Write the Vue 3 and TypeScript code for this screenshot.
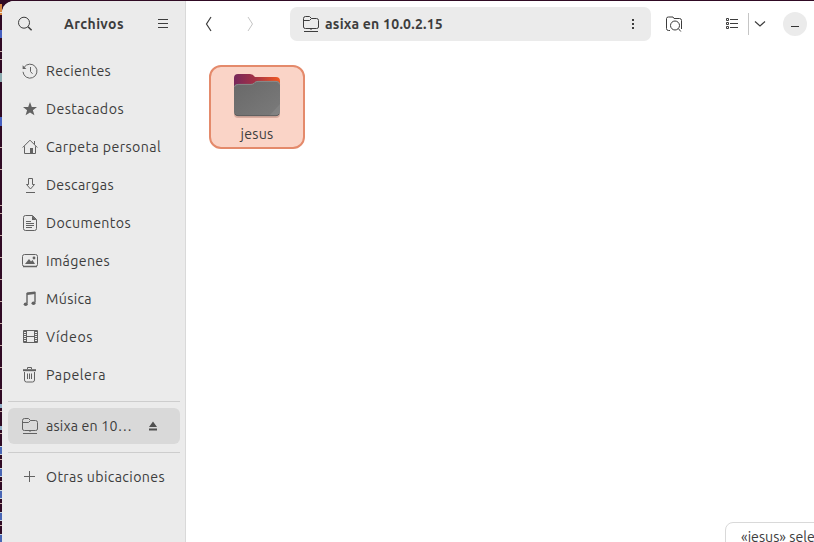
<script setup lang="ts">
import type { Directive } from 'vue'

interface Place {
  name: string
  icon: string
  width: number
}

const places: Place[] = [
  { name: 'Recientes', icon: 'recent', width: 65 },
  { name: 'Destacados', icon: 'star', width: 78 },
  { name: 'Carpeta personal', icon: 'home', width: 115 },
  { name: 'Descargas', icon: 'download', width: 68 },
  { name: 'Documentos', icon: 'document', width: 85 },
  { name: 'Imágenes', icon: 'image', width: 64 },
  { name: 'Música', icon: 'music', width: 46 },
  { name: 'Vídeos', icon: 'video', width: 47 },
  { name: 'Papelera', icon: 'trash', width: 60 },
]

interface Mark {
  top: number
  height: number
  color: string
}

const light = '#c9ada8'
const marks: Mark[] = [
  { top: 4, height: 11, color: '#d88842' },
  { top: 12, height: 1, color: '#eee0d0' },
  { top: 30, height: 8, color: '#465fc0' },
  { top: 73, height: 9, color: '#8cabb0' },
  { top: 117, height: 9, color: '#465fc0' },
  ...[51, 59, 147, 169, 205, 213, 235, 257, 279, 301, 323, 345, 367, 389].map((top) => ({ top, height: 1, color: light })),
  { top: 404, height: 4, color: '#91aec6' },
  { top: 411, height: 1, color: light },
  { top: 426, height: 4, color: '#91aec6' },
  { top: 433, height: 1, color: light },
  ...[446, 468, 490, 512, 534].flatMap((top) => [
    { top, height: 9, color: '#4966b5' },
    { top, height: 1, color: '#c4d4dc' },
    { top: top + 8, height: 1, color: '#c4d4dc' },
    { top: top + 13, height: 1, color: light },
  ]),
]

// Tracks a label so that it occupies the given width.
const vTrack: Directive<HTMLElement, number> = {
  mounted(el, { value }) {
    const natural = el.getBoundingClientRect().width
    const count = (el.textContent ?? '').length
    el.style.letterSpacing = `${(value - natural) / count}px`
  },
}
</script>

<template>
  <div class="desktop">
    <div class="terminal">
      <i v-for="(m, i) in marks" :key="i" :style="{ top: m.top + 'px', height: m.height + 'px', background: m.color }"></i>
    </div>
    <div class="window">
      <aside class="sidebar">
        <header class="side-head">
          <svg class="ic dark" viewBox="0 0 16 16"><circle cx="7" cy="6.7" r="5.5" /><path d="M11 10.7l3.6 3.6" stroke-width="1.5" /></svg>
          <h1><span v-track="60">Archivos</span></h1>
          <svg class="ic dark" viewBox="0 0 16 16"><path d="M3 3.5h10M3 7.5h10M3 11.5h10" /></svg>
        </header>
        <nav>
          <a v-for="p in places" :key="p.name" class="row">
            <svg class="ic" viewBox="0 0 16 16">
              <template v-if="p.icon === 'recent'">
                <path d="M2.2 4.2A7 7 0 1 1 1 8.8" /><path d="M.6 2.3v3.8h3.8z" class="fill" /><path d="M8.5 4v4.5l2 2.3" />
              </template>
              <path v-else-if="p.icon === 'star'" class="fill" d="M8 1l1.8 4.9 5.2.2-4.1 3.2 1.5 5L8 11.4l-4.4 2.9 1.5-5L1 6.1l5.2-.2z" />
              <template v-else-if="p.icon === 'home'">
                <path d="M.7 8.5L8 1.2l7.3 7.3M2.5 7.3v7.2h11V7.3M12.5 2v3.5" /><path class="fill" d="M8 9h3v5.5H8z" />
              </template>
              <path v-else-if="p.icon === 'download'" d="M6.5 1.5h4v6h2L8.5 12l-4-4.5h2zM4 15.5h9" />
              <template v-else-if="p.icon === 'document'">
                <path d="M3.5.5h7l4 4v9q0 2-2 2h-9q-2 0-2-2v-11q0-2 2-2z" /><path class="fill" d="M10 .5l4.5 4.5H10z" /><path d="M4 6.5h5M4 8.5h8M4 10.5h8M4 12.5h6" />
              </template>
              <template v-else-if="p.icon === 'image'">
                <rect x=".5" y="1.5" width="15" height="12" rx="2" /><path d="M1 13.5h14" stroke-width="1.5" /><path class="fill" d="M3 11l4-5 2 2.5L10.5 7l2.5 4z" /><circle class="fill" cx="12" cy="5" r="1.4" />
              </template>
              <template v-else-if="p.icon === 'music'">
                <path d="M5 12.5V2.5l8-1v10" stroke-width="1.4" /><path d="M5 2.8l8-1" stroke-width="2.6" /><ellipse class="fill" cx="3.7" cy="13.2" rx="2" ry="1.7" /><ellipse class="fill" cx="11.5" cy="12.2" rx="2" ry="1.7" />
              </template>
              <template v-else-if="p.icon === 'video'">
                <path d="M1.5 1.5h14v12h-14zM4.5 1.5v12M12.5 1.5v12M4.5 7.5h8" /><path d="M3 2v12M14 2v12" stroke-width="2" stroke-dasharray="1 1" />
              </template>
              <template v-else>
                <path d="M2.5 5v8q0 2 2 2h6q2 0 2-2V5M5.5 6.5V12M7.5 6.5V12M9.5 6.5V12M5.5 2V.5h4V2" /><path d="M1 3.2h13" stroke-width="2" />
              </template>
            </svg>
            <span v-track="p.width">{{ p.name }}</span>
          </a>
        </nav>
        <hr />
        <a class="row current">
          <svg class="ic" viewBox="0 0 16 16"><path d="M.5 11V2.5q0-2 2-2h4l2 2h5q2 0 2 2V11q0 1.5-2 1.5h-11q-2 0-2-1.5zM.5 4.5h6l2-2M1 15.5h14M8 12.5v1.5" /></svg>
          <span v-track="86">asixa en 10…</span>
          <svg class="eject" viewBox="0 0 10 10"><path d="M5 .5L9 6H1zM1 7.5h8v2H1z" /></svg>
        </a>
        <hr />
        <a class="row">
          <svg class="ic" viewBox="0 0 16 16"><path d="M2 7.5h11M7.5 2v11" /></svg>
          <span v-track="119">Otras ubicaciones</span>
        </a>
      </aside>

      <main>
        <header class="toolbar">
          <svg class="ic dark back" viewBox="0 0 16 16"><path d="M10 1L5.5 8l4.5 7" stroke-width="1.2" /></svg>
          <svg class="ic dark forward" viewBox="0 0 16 16"><path d="M6 1l4.5 7L6 15" /></svg>
          <div class="path">
            <svg class="ic dark" viewBox="0 0 16 16"><path d="M.5 11V2.5q0-2 2-2h4l2 2h5q2 0 2 2V11q0 1.5-2 1.5h-11q-2 0-2-1.5zM.5 4.5h6l2-2M1 15.5h14M8 12.5v1.5" /></svg>
            <span class="place" v-track="118">asixa en 10.0.2.15</span>
            <svg class="ic dark" viewBox="0 0 16 16"><path class="fill" d="M7 3h2v2H7zM7 7h2v2H7zM7 11h2v2H7z" /></svg>
          </div>
          <svg class="ic dark find" viewBox="0 0 16 16"><path d="M4 14.5H2.5q-2 0-2-2v-10q0-1.5 2-1.5H7l1 1.5h5.5q2 0 2 2V13" /><circle cx="9" cy="9.5" r="4.5" /><path d="M12.3 12.5l2.5 3" /></svg>
          <svg class="view" viewBox="0 0 12 12"><path d="M.5.5h2v2h-2zM.5 4.5h2v2h-2zM.5 8.5h2v2h-2zM4 1.5h8M4 5.5h8M4 9.5h8" /></svg>
          <i class="divider"></i>
          <svg class="arrow" viewBox="0 0 12 8"><path d="M1 1.5l5 4.5 5-4.5" /></svg>
          <button class="minimize" aria-label="Minimizar"><i></i></button>
        </header>
        <section class="files">
          <div class="file">
            <svg class="folder" viewBox="0 0 50 46">
              <defs>
                <linearGradient id="back"><stop offset="0" stop-color="#77285b" /><stop offset=".45" stop-color="#a33145" /><stop offset="1" stop-color="#f25a22" /></linearGradient>
                <linearGradient id="front" x2="1" y2="1"><stop offset="0" stop-color="#686868" /><stop offset="1" stop-color="#7b7b7b" /></linearGradient>
              </defs>
              <rect x="2" y="14" width="46" height="31" rx="4" fill="#9b6056" opacity=".35" />
              <path fill="url(#back)" d="M2 18V5q0-4 4-4h12q3 0 5 3h21q4 0 4 4v12z" />
              <path fill="url(#front)" d="M2 15q0-4 4-4h13q2 0 3-1l1-1q1-1 3-1h18q4 0 4 4v27q0 4-4 4H6q-4 0-4-4z" />
              <path fill="none" stroke="#929292" stroke-width=".8" d="M2.5 14q0-2.6 4-2.6H19q2 0 3-1l1-1q1-1 3-1h18q3.5 0 3.5 3" />
              <path fill="#fff" opacity=".07" d="M48 31L37 43h7q4 0 4-4z" />
              <path fill="none" stroke="#555" stroke-width=".8" d="M3 41q1 1.7 3 1.7h38q2 0 3-1.7" />
            </svg>
            <span v-track="33">jesus</span>
          </div>
        </section>
      </main>
      <div class="status">«jesus» seleccionado</div>
    </div>
  </div>
</template>

<style scoped>
.desktop {
  position: relative;
  width: 814px;
  height: 542px;
  box-sizing: border-box;
  padding: 1px 0 0 2px;
  overflow: hidden;
  background: #300a24;
  color: #3d3d3d;
  font: 14.2px/20px Ubuntu, "Noto Sans", sans-serif;
}
.terminal i {
  position: absolute;
  left: 0;
  width: 2px;
}
.window {
  position: relative;
  display: flex;
  height: 541px;
  overflow: hidden;
  background: #fff;
  border-radius: 12px 0 0 0;
}
.sidebar {
  box-sizing: border-box;
  width: 184px;
  flex: none;
  padding: 0 5px 0 6px;
  background: #ebebeb;
  border-right: 1px solid #d9d9d9;
}
.ic {
  width: 16px;
  height: 16px;
  flex: none;
  overflow: visible;
}
svg {
  display: block;
  fill: none;
  stroke: #626262;
}
.dark {
  stroke: #3d3d3d;
}
.fill {
  fill: #626262;
  stroke: none;
}
.dark .fill {
  fill: #3d3d3d;
}
.side-head {
  display: flex;
  align-items: center;
  height: 46px;
  padding: 0 9px;
}
h1 {
  flex: 1;
  margin: 0;
  text-align: center;
  font-size: 14px;
  line-height: 20px;
}
nav {
  display: grid;
  gap: 2px;
  padding-top: 6px;
}
.row {
  display: flex;
  align-items: center;
  gap: 8px;
  height: 36px;
  padding-left: 14px;
  border-radius: 6px;
  white-space: nowrap;
}
hr {
  height: 1px;
  margin: 8px 0 6px;
  border: 0;
  background: #cdcdcd;
}
.current {
  background: #d9d9d9;
}
.current + hr {
  margin-top: 8px;
}
.eject {
  width: 10px;
  height: 10px;
  margin-left: 8px;
  fill: #505050;
  stroke: none;
}
main {
  flex: 1;
  min-width: 0;
}
.toolbar {
  display: flex;
  align-items: center;
  height: 46px;
  padding-left: 15px;
}
.forward {
  margin-left: 25px;
  opacity: .3;
}
.path {
  box-sizing: border-box;
  display: flex;
  align-items: center;
  width: 361px;
  height: 34px;
  margin-left: 32px;
  padding: 0 10px 0 13px;
  border-radius: 7px;
  background: #ebebeb;
}
.place {
  margin-left: 6px;
  font-weight: 700;
  font-size: 14px;
  white-space: nowrap;
}
.path .ic:last-child {
  margin-left: auto;
}
.find {
  margin-left: 15px;
}
.view {
  width: 12px;
  height: 12px;
  margin-left: 44px;
  stroke: #3d3d3d;
}
.divider {
  width: 1px;
  height: 22px;
  margin-left: 10px;
  background: #c5c5c5;
}
.arrow {
  width: 12px;
  height: 8px;
  margin-left: 5px;
  stroke: #3d3d3d;
  stroke-width: 1.2;
}
.minimize {
  display: grid;
  place-items: center;
  width: 24px;
  height: 24px;
  margin: 0 0 0 17px;
  padding: 0;
  border: 0;
  border-radius: 50%;
  background: #ebebeb;
}
.minimize i {
  width: 8px;
  height: 1px;
  margin-top: 4px;
  background: #333;
}
.files {
  padding: 18px 23px;
}
.file {
  box-sizing: border-box;
  display: flex;
  flex-direction: column;
  align-items: center;
  width: 96px;
  height: 84px;
  padding-top: 6px;
  border: 2px solid #e48a6b;
  border-radius: 12px;
  background: #fad4c7;
}
.folder {
  width: 50px;
  height: 46px;
  margin-bottom: 5px;
  stroke: none;
}
.status {
  position: absolute;
  top: 521px;
  left: 723px;
  width: 160px;
  height: 30px;
  padding: 4px 0 0 15px;
  border: 1px solid #d9d9d9;
  border-radius: 8px 0 0 0;
  background: #fff;
  white-space: nowrap;
}
</style>
